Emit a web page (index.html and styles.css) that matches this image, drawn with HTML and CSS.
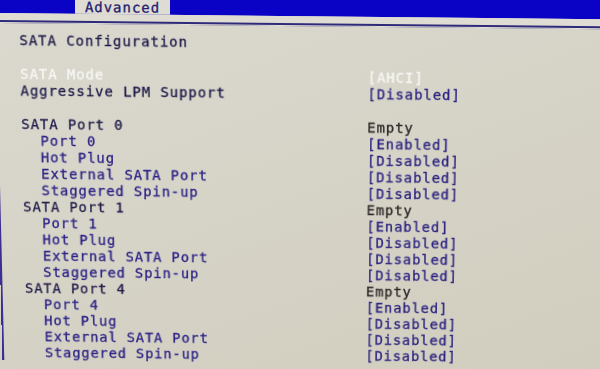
FILE: index.html
```html
<!DOCTYPE html>
<html>
<head>
    <link rel="stylesheet" href="styles.css">
</head>
<body>
    <div class="screen">
        <div class="menubar">
            <div class="bar-left"></div>
            <div class="tab">Advanced</div>
            <div class="bar-right"></div>
        </div>
        <div class="band"></div>
        <div class="rule"></div>

        <div class="panel">
            <div class="row"><span class="head">SATA Configuration</span></div>
            <div class="row blank"></div>
            <div class="row selected"><span>SATA Mode</span><span>[AHCI]</span></div>
            <div class="row"><span class="head">Aggressive LPM Support</span><span class="val">[Disabled]</span></div>
            <div class="row blank"></div>

            <div class="row"><span class="head">SATA Port 0</span><span class="empty">Empty</span></div>
            <div class="row sub"><span>Port 0</span><span class="val">[Enabled]</span></div>
            <div class="row sub"><span>Hot Plug</span><span class="val">[Disabled]</span></div>
            <div class="row sub"><span>External SATA Port</span><span class="val">[Disabled]</span></div>
            <div class="row sub"><span>Staggered Spin-up</span><span class="val">[Disabled]</span></div>

            <div class="row"><span class="head">SATA Port 1</span><span class="empty">Empty</span></div>
            <div class="row sub"><span>Port 1</span><span class="val">[Enabled]</span></div>
            <div class="row sub"><span>Hot Plug</span><span class="val">[Disabled]</span></div>
            <div class="row sub"><span>External SATA Port</span><span class="val">[Disabled]</span></div>
            <div class="row sub"><span>Staggered Spin-up</span><span class="val">[Disabled]</span></div>

            <div class="row"><span class="head">SATA Port 4</span><span class="empty">Empty</span></div>
            <div class="row sub"><span>Port 4</span><span class="val">[Enabled]</span></div>
            <div class="row sub"><span>Hot Plug</span><span class="val">[Disabled]</span></div>
            <div class="row sub"><span>External SATA Port</span><span class="val">[Disabled]</span></div>
            <div class="row sub"><span>Staggered Spin-up</span><span class="val">[Disabled]</span></div>
        </div>
    </div>
</body>
</html>
```

FILE: styles.css
```css
html, body {
    overflow: hidden;
}
body {
    margin: 0;
    padding: 0;
    width: 600px;
    height: 369px;
    background: linear-gradient(160deg, #dbd9cf 0%, #d6d3c7 50%, #d1cebf 100%);
    font-family: "DejaVu Sans Mono", "Liberation Mono", monospace;
    font-size: 14px;
    letter-spacing: 0.95px;
    -webkit-text-stroke: 0.3px;
}

/* the photo is taken a little off-axis: slight tilt on the whole screen */
.screen {
    width: 600px;
    transform-origin: 0 0;
    transform: skewY(0.6deg);
}

.menubar {
    display: flex;
    height: 23px;
    margin-top: -10px;
    background-color: #0a02c4;
}
.bar-left {
    width: 75px;
}
.tab {
    width: 95px;
    padding-top: 10px;
    line-height: 13px;
    text-align: center;
    background-color: #dedcd3;
    color: #23206c;
}
.bar-right {
    flex: 1;
}
.band {
    height: 7px;
    background-color: #dedcd3;
}
.rule {
    height: 2px;
    background-color: #2f2a7a;
    border-bottom: 1px solid #e3e1d8;
}

.panel {
    width: 581px;
    margin-left: -6px;
    border-left: 2px solid #3b2f92;
    padding: 9px 0 0 23px;
    transform-origin: 0 0;
    transform: translateX(284px) perspective(1000px) rotateX(-5deg) translateX(-284px);
}
.row {
    display: grid;
    grid-template-columns: 349px auto;
    height: 17px;
    line-height: 17px;
    white-space: pre;
}
.head {
    color: #1e1a48;
}
.sub span:first-child {
    padding-left: 19px;
    color: #2b2285;
}
.val {
    color: #2c2381;
}
.empty {
    color: #2d2727;
}
.selected {
    color: #f6f6f2;
}
```
